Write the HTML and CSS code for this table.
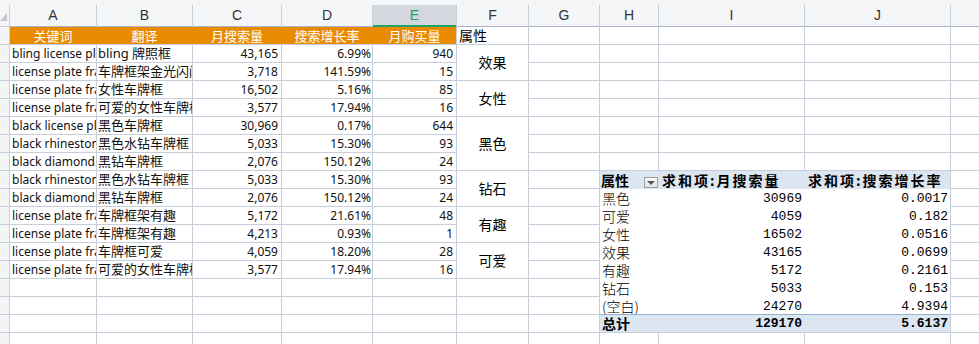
FILE: index.html
```html
<!DOCTYPE html>
<html lang="zh-CN">
<head>
<meta charset="utf-8">
<title>Sheet</title>
<link rel="stylesheet" href="styles.css">
</head>
<body>
<div class="topstrip"></div>
<div class="grid">
  <div class="corner"><span class="tri"></span></div>
  <div class="ch">A</div><div class="ch">B</div><div class="ch">C</div><div class="ch">D</div><div class="ch sel">E</div><div class="ch">F</div><div class="ch">G</div><div class="ch">H</div><div class="ch">I</div><div class="ch">J</div><div class="ch"></div>

  <div class="rh"></div>
  <div class="c hd">关键词</div><div class="c hd">翻译</div><div class="c hd">月搜索量</div><div class="c hd">搜索增长率</div><div class="c hd last">月购买量</div>
  <div class="c attr">属性</div><div class="c"></div><div class="c"></div><div class="c"></div><div class="c"></div><div class="c"></div>

  <div class="rh"></div>
  <div class="c">bling license plate frame</div><div class="c b">bling 牌照框</div><div class="c n">43,165</div><div class="c p">6.99%</div><div class="c n">940</div>
  <div class="c m s2">效果</div><div class="c"></div><div class="c"></div><div class="c"></div><div class="c"></div><div class="c"></div>

  <div class="rh"></div>
  <div class="c">license plate frame bling</div><div class="c b">车牌框架金光闪闪</div><div class="c n">3,718</div><div class="c p">141.59%</div><div class="c n">15</div>
  <div class="c"></div><div class="c"></div><div class="c"></div><div class="c"></div><div class="c"></div>

  <div class="rh"></div>
  <div class="c">license plate frames for women</div><div class="c b">女性车牌框</div><div class="c n">16,502</div><div class="c p">5.16%</div><div class="c n">85</div>
  <div class="c m s2">女性</div><div class="c"></div><div class="c"></div><div class="c"></div><div class="c"></div><div class="c"></div>

  <div class="rh"></div>
  <div class="c">license plate frame cute for women</div><div class="c b">可爱的女性车牌框</div><div class="c n">3,577</div><div class="c p">17.94%</div><div class="c n">16</div>
  <div class="c"></div><div class="c"></div><div class="c"></div><div class="c"></div><div class="c"></div>

  <div class="rh"></div>
  <div class="c">black license plate frame</div><div class="c b">黑色车牌框</div><div class="c n">30,969</div><div class="c p">0.17%</div><div class="c n">644</div>
  <div class="c m s3">黑色</div><div class="c"></div><div class="c"></div><div class="c"></div><div class="c"></div><div class="c"></div>

  <div class="rh"></div>
  <div class="c">black rhinestone license plate frame</div><div class="c b">黑色水钻车牌框</div><div class="c n">5,033</div><div class="c p">15.30%</div><div class="c n">93</div>
  <div class="c"></div><div class="c"></div><div class="c"></div><div class="c"></div><div class="c"></div>

  <div class="rh"></div>
  <div class="c">black diamond license plate frame</div><div class="c b">黑钻车牌框</div><div class="c n">2,076</div><div class="c p">150.12%</div><div class="c n">24</div>
  <div class="c"></div><div class="c"></div><div class="c"></div><div class="c"></div><div class="c"></div>

  <div class="rh"></div>
  <div class="c">black rhinestone license plate frame</div><div class="c b">黑色水钻车牌框</div><div class="c n">5,033</div><div class="c p">15.30%</div><div class="c n">93</div>
  <div class="c m s2">钻石</div><div class="c"></div>
  <div class="pivot">
    <div class="pv ph first">属性<span class="dd"><span class="ddtri"></span></span></div>
    <div class="pv ph lab">求和项:月搜索量</div>
    <div class="pv ph lab">求和项:搜索增长率</div>

    <div class="pv lbl">黑色</div><div class="pv num">30969</div><div class="pv num r">0.0017</div>
    <div class="pv lbl">可爱</div><div class="pv num">4059</div><div class="pv num r">0.182</div>
    <div class="pv lbl">女性</div><div class="pv num">16502</div><div class="pv num r">0.0516</div>
    <div class="pv lbl">效果</div><div class="pv num">43165</div><div class="pv num r">0.0699</div>
    <div class="pv lbl">有趣</div><div class="pv num">5172</div><div class="pv num r">0.2161</div>
    <div class="pv lbl">钻石</div><div class="pv num">5033</div><div class="pv num r">0.153</div>
    <div class="pv lbl">(空白)</div><div class="pv num">24270</div><div class="pv num r">4.9394</div>
    <div class="pv lbl tot">总计</div><div class="pv num tot">129170</div><div class="pv num r tot">5.6137</div>
  </div>
  <div class="c"></div>

  <div class="rh"></div>
  <div class="c">black diamond license plate frame</div><div class="c b">黑钻车牌框</div><div class="c n">2,076</div><div class="c p">150.12%</div><div class="c n">24</div>
  <div class="c"></div><div class="c"></div>

  <div class="rh"></div>
  <div class="c">license plate frame funny</div><div class="c b">车牌框架有趣</div><div class="c n">5,172</div><div class="c p">21.61%</div><div class="c n">48</div>
  <div class="c m s2">有趣</div><div class="c"></div><div class="c"></div>

  <div class="rh"></div>
  <div class="c">license plate frames funny</div><div class="c b">车牌框架有趣</div><div class="c n">4,213</div><div class="c p">0.93%</div><div class="c n">1</div>
  <div class="c"></div><div class="c"></div>

  <div class="rh"></div>
  <div class="c">license plate frame cute</div><div class="c b">车牌框可爱</div><div class="c n">4,059</div><div class="c p">18.20%</div><div class="c n">28</div>
  <div class="c m s2">可爱</div><div class="c"></div><div class="c"></div>

  <div class="rh"></div>
  <div class="c">license plate frame cute for women</div><div class="c b">可爱的女性车牌框</div><div class="c n">3,577</div><div class="c p">17.94%</div><div class="c n">16</div>
  <div class="c"></div><div class="c"></div>

  <div class="rh"></div>
  <div class="c"></div><div class="c"></div><div class="c"></div><div class="c"></div><div class="c"></div><div class="c"></div><div class="c"></div><div class="c"></div>

  <div class="rh"></div>
  <div class="c"></div><div class="c"></div><div class="c"></div><div class="c"></div><div class="c"></div><div class="c"></div><div class="c"></div><div class="c"></div>

  <div class="rh"></div>
  <div class="c"></div><div class="c"></div><div class="c"></div><div class="c"></div><div class="c"></div><div class="c"></div><div class="c"></div><div class="c"></div>

  <div class="rh"></div>
  <div class="c"></div><div class="c"></div><div class="c"></div><div class="c"></div><div class="c"></div><div class="c"></div><div class="c"></div><div class="c"></div><div class="c"></div><div class="c"></div><div class="c"></div>
</div>
</body>
</html>
```

FILE: styles.css
```css
* { box-sizing: border-box; margin: 0; padding: 0; }

html, body {
  margin: 0;
  background: #ffffff;
  overflow: hidden;
  font-family: "Noto Sans", "Noto Sans CJK SC", sans-serif;
}

.topstrip {
  height: 5px;
  background: #f5f6f8;
}

.grid {
  display: grid;
  width: 979px;
  grid-template-columns: 9px 86px 95px 88px 90px 83px 71px 70px 58px 145px 145px 28px;
  grid-template-rows: 21px repeat(18, 17px);
  gap: 1px;
  background: #c9cedb;
}

.corner {
  background: #f5f6f8;
  position: relative;
}

.tri {
  position: absolute;
  left: 0;
  bottom: 5px;
  width: 0;
  height: 0;
  border-left: 7px solid transparent;
  border-bottom: 8px solid #c3c6cc;
}

.ch {
  background: #f5f6f8;
  text-align: center;
  font-family: "Liberation Sans", sans-serif;
  font-size: 14px;
  line-height: 21px;
  color: #333333;
  box-shadow: 0 1px 0 #a9b2c6;
}

.ch.sel {
  background: #d4d7dd;
  color: #21a366;
  border-bottom: 1px solid #21a366;
  box-shadow: 0 1px 0 #21a366;
}

.rh {
  background: #f3f4f6;
}

.c {
  background: #ffffff;
  font-family: "Noto Sans", "Noto Sans CJK SC", sans-serif;
  font-size: 12px;
  line-height: 17px;
  white-space: nowrap;
  overflow: hidden;
  padding: 0 0 0 2px;
  color: #111111;
}

.c.b {
  font-size: 13px;
  padding-left: 1px;
}

.c.n {
  text-align: right;
  padding: 0 3px 0 0;
}

.c.p {
  text-align: right;
  padding: 0 1px 0 0;
}

.c.hd {
  background: #e98b00;
  color: #ffffff;
  font-family: "Noto Sans CJK SC", sans-serif;
  font-size: 13px;
  text-align: center;
  padding: 0;
  overflow: visible;
  box-shadow: 1px 0 0 #e98b00;
}

.c.hd.last {
  box-shadow: none;
}

.c.attr {
  font-family: "Noto Sans CJK SC", sans-serif;
  font-size: 14px;
  padding-left: 2px;
  color: #000000;
}

.c.m {
  display: flex;
  align-items: center;
  justify-content: center;
  font-family: "Noto Sans CJK SC", sans-serif;
  font-size: 14px;
  color: #000000;
  padding: 0;
}

.s2 { grid-row: span 2; }
.s3 { grid-row: span 3; }

.pivot {
  grid-column: span 3;
  grid-row: span 9;
  background: #ffffff;
  display: grid;
  grid-template-columns: 59px 146px 145px;
  grid-template-rows: repeat(7, 18px) 17px 18px;
  font-family: "Noto Sans CJK SC", sans-serif;
  font-size: 14px;
  color: #000000;
}

.pv {
  white-space: nowrap;
  overflow: hidden;
  line-height: 18px;
}

.pv.ph {
  background: #dce6f1;
  font-weight: 700;
}

.pv.ph.first {
  display: flex;
  justify-content: space-between;
  align-items: flex-end;
  padding: 0 1px 0 1px;
}

.pv.ph.lab {
  padding-left: 3px;
  letter-spacing: 2px;
}

.dd {
  width: 14px;
  height: 11px;
  margin-bottom: 1px;
  border: 1px solid #a0a0a0;
  background: linear-gradient(#fbfbfb, #e2e2e2);
  display: flex;
  align-items: center;
  justify-content: center;
}

.ddtri {
  width: 0;
  height: 0;
  border-left: 4px solid transparent;
  border-right: 4px solid transparent;
  border-top: 4px solid #555555;
}

.pv.lbl {
  padding-left: 2px;
  font-weight: 300;
}

.pv.num {
  text-align: right;
  padding-right: 3px;
  font-family: "Liberation Mono", "DejaVu Sans Mono", monospace;
  font-size: 13px;
  line-height: 19px;
}

.pv.num.r {
  padding-right: 2px;
}

.pv.tot {
  background: #dce6f1;
  border-top: 1px solid #95b3d7;
  font-weight: 700;
  line-height: 17px;
}
```
